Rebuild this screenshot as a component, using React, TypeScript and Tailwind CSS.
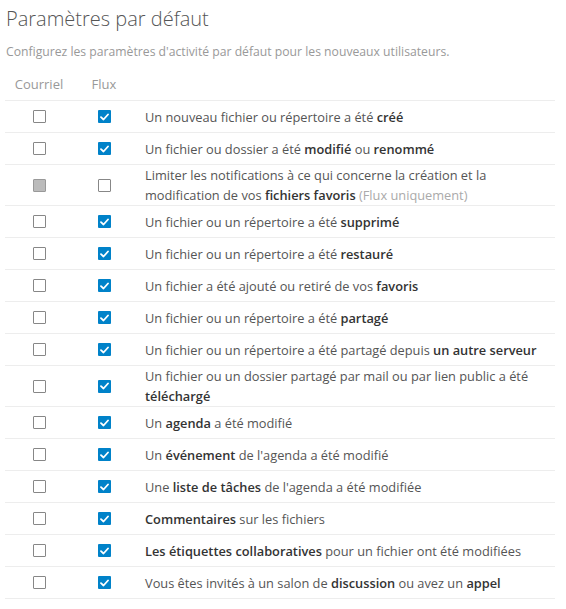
import React from 'react';

type Row = { email: 'off' | 'disabled'; stream: boolean; text: React.ReactNode };

const B = ({ children }: { children: React.ReactNode }) => (
  <strong className="font-semibold text-[#333]">{children}</strong>
);

const rows: Row[] = [
  { email: 'off', stream: true, text: <>Un nouveau fichier ou répertoire a été <B>créé</B></> },
  { email: 'off', stream: true, text: <>Un fichier ou dossier a été <B>modifié</B> ou <B>renommé</B></> },
  {
    email: 'disabled',
    stream: false,
    text: (
      <>
        Limiter les notifications à ce qui concerne la création et la modification de vos <B>fichiers favoris</B>{' '}
        <span className="text-[#aaa]">(Flux uniquement)</span>
      </>
    ),
  },
  { email: 'off', stream: true, text: <>Un fichier ou un répertoire a été <B>supprimé</B></> },
  { email: 'off', stream: true, text: <>Un fichier ou un répertoire a été <B>restauré</B></> },
  { email: 'off', stream: true, text: <>Un fichier a été ajouté ou retiré de vos <B>favoris</B></> },
  { email: 'off', stream: true, text: <>Un fichier ou un répertoire a été <B>partagé</B></> },
  { email: 'off', stream: true, text: <>Un fichier ou un répertoire a été partagé depuis <B>un autre serveur</B></> },
  { email: 'off', stream: true, text: <>Un fichier ou un dossier partagé par mail ou par lien public a été <B>téléchargé</B></> },
  { email: 'off', stream: true, text: <>Un <B>agenda</B> a été modifié</> },
  { email: 'off', stream: true, text: <>Un <B>événement</B> de l'agenda a été modifié</> },
  { email: 'off', stream: true, text: <>Une <B>liste de tâches</B> de l'agenda a été modifiée</> },
  { email: 'off', stream: true, text: <><B>Commentaires</B> sur les fichiers</> },
  { email: 'off', stream: true, text: <><B>Les étiquettes collaboratives</B> pour un fichier ont été modifiées</> },
  { email: 'off', stream: true, text: <>Vous êtes invités à un salon de <B>discussion</B> ou avez un <B>appel</B></> },
];

const Box = ({ state }: { state: 'off' | 'on' | 'disabled' }) => {
  if (state === 'on')
    return (
      <span className="flex h-[13px] w-[13px] items-center justify-center rounded-[1px] bg-[#0082c9]">
        <svg width="9" height="8" viewBox="0 0 9 8" fill="none">
          <path d="M1 4.2 L3.5 6.5 L8 1.5" stroke="white" strokeWidth="1.8" strokeLinecap="round" strokeLinejoin="round" />
        </svg>
      </span>
    );
  if (state === 'disabled')
    return <span className="block h-[13px] w-[13px] rounded-[1px] border border-[#999] bg-[#bbb]" />;
  return <span className="block h-[13px] w-[13px] rounded-[1px] border border-[#878787] bg-white" />;
};

export default function App() {
  return (
    <div className="min-h-screen bg-white px-[5px] pt-[5px] text-[12.8px] text-[#555]" style={{ fontFamily: '"Open Sans", sans-serif' }}>
      <h2 className="pl-px text-[20px] font-light leading-[28px] text-[#555]">Paramètres par défaut</h2>
      <p className="mt-[9px] pl-px text-[12.2px] leading-5 text-[#999]">
        Configurez les paramètres d'activité par défaut pour les nouveaux utilisateurs.
      </p>
      <div className="mt-2 w-[550px]">
        <div className="flex h-[31px] items-center border-b border-[#ededed] text-[13px] text-[#999]">
          <div className="w-[68px] text-center">Courriel</div>
          <div className="w-[62px] text-center">Flux</div>
        </div>
        {rows.map((r, i) => (
          <div key={i} className="flex min-h-[32px] items-center border-b border-[#ededed]">
            <div className="flex w-[68px] justify-center">
              <Box state={r.email} />
            </div>
            <div className="flex w-[62px] justify-center">
              <Box state={r.stream ? 'on' : 'off'} />
            </div>
            <div className="flex-1 pl-[10px] pr-2 leading-5">{r.text}</div>
          </div>
        ))}
      </div>
    </div>
  );
}
